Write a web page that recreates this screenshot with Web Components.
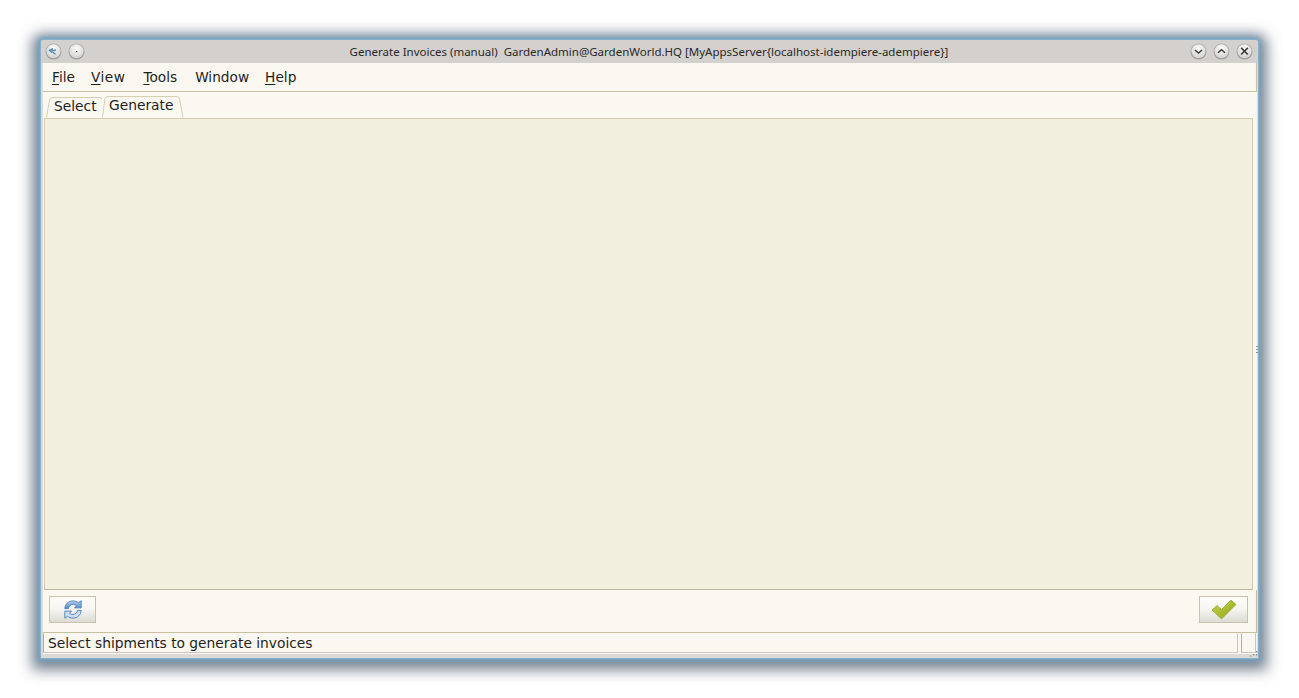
<!DOCTYPE html>
<html>
<head>
<meta charset="utf-8">
<title>Generate Invoices (manual)</title>
<style>
  html, body { margin: 0; height: 100%; background: #fff; overflow: hidden; }
  body { padding: 40px 41px; box-sizing: border-box; font-family: "DejaVu Sans", sans-serif; }
</style>
</head>
<body>
<app-window>
  <window-title slot="title">Generate Invoices (manual)&nbsp; GardenAdmin@GardenWorld.HQ [MyAppsServer{localhost-idempiere-adempiere}]</window-title>
  <menu-bar slot="menu"></menu-bar>
  <tab-strip slot="tabs"></tab-strip>
  <action-bar slot="actions"></action-bar>
  <status-bar slot="status">Select shipments to generate invoices</status-bar>
</app-window>

<script>
class AppWindow extends HTMLElement {
  constructor() {
    super();
    this.attachShadow({ mode: "open" });
  }

  connectedCallback() {
    this.shadowRoot.innerHTML = `
      <style>
        :host {
          display: flex;
          flex-direction: column;
          position: relative;
          width: 1217px;
          height: 618px;
          box-sizing: border-box;
          background: #dcdad6;
          border-radius: 3px 3px 0 0;
          box-shadow: 0 0 1px 1px #86b4d0, 0 0 4px 3px rgba(115,165,198,.85), 0 3px 14px 9px rgba(58,74,94,.68);
        }
        .body {
          display: flex;
          flex-direction: column;
          flex: 1;
          min-height: 0;
          margin: 0 1px 4px 2px;
          background: #fbf8f1;
        }
        .panel {
          height: 470px;
          margin: 0 4px 0 1px;
          background: #f1efde;
          border: 1px solid #d4caac;
          border-bottom-color: #bdb6a2;
          flex: none;
        }
        .grip {
          position: absolute;
          right: 0;
          top: 306px;
          width: 2px;
          height: 9px;
          background: repeating-linear-gradient(#8e8e88 0 1px, transparent 1px 3px);
        }
        .corner { position: absolute; right: 0; bottom: 1px; }
      </style>
      <slot name="title"></slot>
      <div class="body">
        <slot name="menu"></slot>
        <slot name="tabs"></slot>
        <div class="panel"></div>
        <slot name="actions"></slot>
        <slot name="status"></slot>
      </div>
      <div class="grip"></div>
      <svg class="corner" width="8" height="6" viewBox="0 0 8 6">
        <rect x="6" y="0" width="1.4" height="1.4" fill="#8b8b86"/>
        <rect x="3" y="3" width="1.4" height="1.4" fill="#8b8b86"/>
        <rect x="6" y="3" width="1.4" height="1.4" fill="#8b8b86"/>
        <rect x="0" y="4.4" width="1.4" height="1.4" fill="#a5a5a0"/>
      </svg>
    `;
  }
}

class WindowTitle extends HTMLElement {
  constructor() {
    super();
    this.attachShadow({ mode: "open" });
  }

  button(glyph) {
    return `
      <svg width="17" height="17" viewBox="0 0 17 17">
        <defs>
          <linearGradient id="knob" x1="0" y1="0" x2="0" y2="1">
            <stop offset="0" stop-color="#a3a19f"/>
            <stop offset="1" stop-color="#8b8987"/>
          </linearGradient>
          <radialGradient id="face" cx=".5" cy=".3" r=".75">
            <stop offset="0" stop-color="#fbfbfa"/>
            <stop offset="1" stop-color="#d0cfcd"/>
          </radialGradient>
        </defs>
        <circle cx="8.5" cy="8.5" r="8" fill="url(#knob)" opacity=".75"/>
        <circle cx="8.5" cy="8.2" r="7" fill="url(#face)"/>
        ${glyph}
      </svg>`;
  }

  connectedCallback() {
    const app = `<path d="M3.8 7.6 L8 5.6 M5.2 8.4 L11 7 M7.5 9 L10.6 11.2 M4.6 6.8 L6.8 9.6" stroke="#4d86b5" stroke-width="1.4" fill="none"/>`;
    const dot = `<rect x="8" y="8" width="1.2" height="1.2" fill="#55534f"/>`;
    const down = `<path d="M5 7 L8.5 10 L12 7" stroke="#3b3a38" stroke-width="1.5" fill="none"/>`;
    const up = `<path d="M5 9.8 L8.5 6.8 L12 9.8" stroke="#3b3a38" stroke-width="1.5" fill="none"/>`;
    const close = `<path d="M5.2 4.9 L11.8 11.5 M11.8 4.9 L5.2 11.5" stroke="#3b3a38" stroke-width="1.6" fill="none"/>`;
    this.shadowRoot.innerHTML = `
      <style>
        :host {
          display: flex;
          align-items: center;
          height: 23px;
          padding: 0 5px 0 4px;
          background: #d3d0cd;
          border-radius: 3px 3px 0 0;
          font: 11.5px "Noto Sans", "Open Sans", sans-serif;
          color: #2a2927;
          white-space: nowrap;
        }
        .group { display: flex; gap: 6px; width: 70px; flex: none; }
        .group.right { justify-content: flex-end; }
        svg { display: block; }
        .text { flex: 1; text-align: center; }
      </style>
      <div class="group">${this.button(app)}${this.button(dot)}</div>
      <div class="text"><slot></slot></div>
      <div class="group right">${this.button(down)}${this.button(up)}${this.button(close)}</div>
    `;
  }
}

class MenuBar extends HTMLElement {
  constructor() {
    super();
    this.attachShadow({ mode: "open" });
  }

  connectedCallback() {
    const items = [["F", "ile"], ["V", "iew"], ["T", "ools"], ["", "Window"], ["H", "elp"]];
    this.shadowRoot.innerHTML = `
      <style>
        :host {
          display: flex;
          align-items: center;
          gap: 16px;
          height: 28px;
          padding: 0 0 0 9px;
          border-bottom: 1px solid #c9c0a6;
          border-right: 1px solid #c9c0a6;
          font: 13.7px "DejaVu Sans", sans-serif;
          color: #1e1e1c;
        }
        u { text-underline-offset: 2px; text-decoration-thickness: 1px; }
        span:nth-child(3) { letter-spacing: .5px; }
        span:nth-child(4) { margin-left: 2px; }
        span:nth-child(5) { margin-left: 2px; }
      </style>
      ${items.map(([key, rest]) => `<span>${key ? `<u>${key}</u>` : ""}${rest}</span>`).join("")}
    `;
  }
}

class TabStrip extends HTMLElement {
  constructor() {
    super();
    this.attachShadow({ mode: "open" });
  }

  connectedCallback() {
    this.shadowRoot.innerHTML = `
      <style>
        :host {
          display: flex;
          height: 26px;
          padding-left: 3px;
          font: 13.8px "DejaVu Sans", sans-serif;
          color: #1e1e1c;
        }
        .tab { position: relative; display: block; }
        .tab svg { position: absolute; left: 0; top: 0; }
        .tab span { position: relative; display: block; }
        .select { width: 56px; height: 26px; }
        .select span { padding: 6px 0 0 8px; }
        .generate { width: 83px; height: 26px; }
        .generate span { padding: 5px 0 0 7px; }
      </style>
      <div class="tab select">
        <svg width="57" height="26" fill="none" stroke="#d8cfae">
          <path d="M0.5 25.5 L3.5 8 Q4 5.5 7 5.5 L53 5.5 Q55.5 5.5 56 7"/>
        </svg>
        <span>Select</span>
      </div>
      <div class="tab generate">
        <svg width="83" height="27" fill="none" stroke="#d8cfae">
          <path d="M0.5 25.5 L3 6.5 Q3.5 4.5 6.5 4.5 L74 4.5 Q77 4.5 77.5 7 L81 25.5"/>
        </svg>
        <span>Generate</span>
      </div>
    `;
  }
}

class ActionBar extends HTMLElement {
  constructor() {
    super();
    this.attachShadow({ mode: "open" });
  }

  connectedCallback() {
    this.shadowRoot.innerHTML = `
      <style>
        :host {
          display: flex;
          justify-content: space-between;
          align-items: flex-start;
          height: 43px;
          box-sizing: border-box;
          padding: 6px 8px 0 6px;
          border-bottom: 1px solid #c8bfa3;
          border-right: 1px solid #c8bfa3;
        }
        button {
          display: flex;
          align-items: center;
          justify-content: center;
          width: 47px;
          height: 27px;
          padding: 0;
          box-sizing: border-box;
          border: 1px solid #c8c2ae;
          background: linear-gradient(#fdfcf9 0%, #f7f6f2 45%, #dddbd5 100%);
          border-radius: 0;
        }
        button.ok { width: 49px; }
      </style>
      <button>
        <svg width="20" height="21" viewBox="0 0 22 22">
          <defs>
            <linearGradient id="blue" x1="0" y1="0" x2="0" y2="1">
              <stop offset="0" stop-color="#b4d0ec"/>
              <stop offset="1" stop-color="#5188c4"/>
            </linearGradient>
          </defs>
          <path d="M2 10 C2.3 5 6 1.6 11 1.6 C13.8 1.6 15.5 2.4 17 3.6 L20 1.4 L20 9.2 L12.6 9.2 L15 6.8 C13.5 5.8 12.3 5.5 11 5.5 C8.5 5.5 6.4 7.3 6 10 Z" fill="url(#blue)" stroke="#4a80bc" stroke-width="1"/>
          <path d="M20 12 C19.7 17 16 20.4 11 20.4 C8.2 20.4 6.5 19.6 5 18.4 L2 20.6 L2 12.8 L9.4 12.8 L7 15.2 C8.5 16.2 9.7 16.5 11 16.5 C13.5 16.5 15.6 14.7 16 12 Z" fill="#cfe0f2" stroke="#4a80bc" stroke-width="1"/>
        </svg>
      </button>
      <button class="ok">
        <svg width="26" height="21" viewBox="0 0 26 21">
          <defs>
            <linearGradient id="green" x1="0" y1="0" x2="1" y2="1">
              <stop offset="0" stop-color="#c6d24c"/>
              <stop offset=".55" stop-color="#a8bb2e"/>
              <stop offset="1" stop-color="#8a9e22"/>
            </linearGradient>
          </defs>
          <path d="M1 11 L6 6.5 L10.5 10.5 L20 1 L25 5.5 L10.5 20 Z" fill="url(#green)" stroke="#97a83a" stroke-width=".8"/>
        </svg>
      </button>
    `;
  }
}

class StatusBar extends HTMLElement {
  constructor() {
    super();
    this.attachShadow({ mode: "open" });
  }

  connectedCallback() {
    this.shadowRoot.innerHTML = `
      <style>
        :host {
          display: flex;
          gap: 3px;
          flex: 1;
          font: 13.8px "DejaVu Sans", sans-serif;
          color: #1e1e1c;
        }
        .cell {
          box-sizing: border-box;
          height: 20px;
          line-height: 19px;
          background: #fbf8f1;
          border: 1px solid #c8c6bf;
          border-left-color: #aeaca4;
          border-top-color: #fbf8f1;
        }
        .msg { flex: 1; padding-left: 4px; }
        .side { width: 15px; flex: none; margin-right: 1px; }
      </style>
      <div class="cell msg"><slot></slot></div>
      <div class="cell side"></div>
    `;
  }
}

customElements.define("app-window", AppWindow);
customElements.define("window-title", WindowTitle);
customElements.define("menu-bar", MenuBar);
customElements.define("tab-strip", TabStrip);
customElements.define("action-bar", ActionBar);
customElements.define("status-bar", StatusBar);
</script>
</body>
</html>
